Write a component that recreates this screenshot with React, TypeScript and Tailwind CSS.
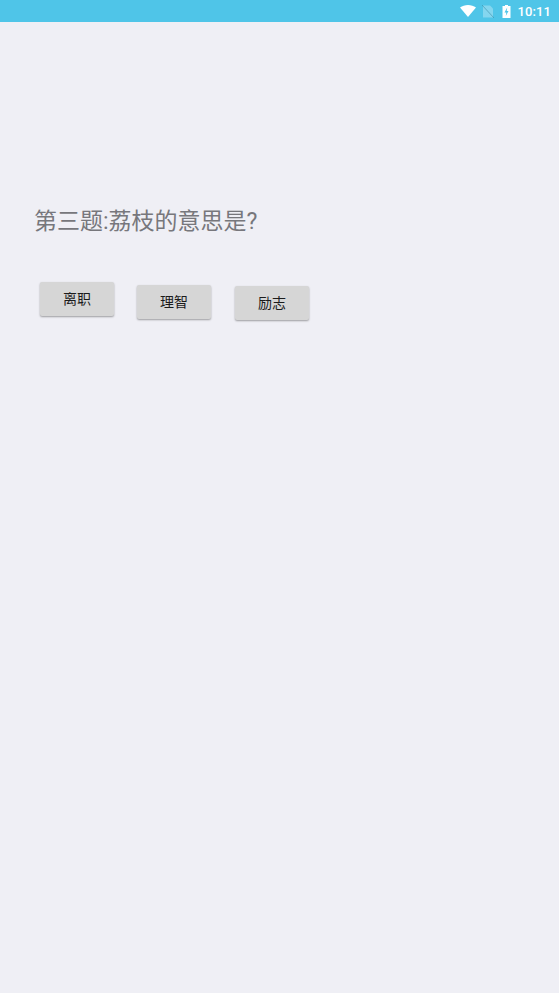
export default function App() {
  const btn = "w-[74px] h-[34px] bg-[#d6d6d6] rounded-[2px] shadow-[0_1px_2px_rgba(0,0,0,0.35)] flex items-center justify-center text-[14px] text-[#1c1c1c] shrink-0";
  const font = { fontFamily: '"Roboto", "Noto Sans CJK SC", sans-serif' };
  return (
    <div className="w-[559px] h-[993px] bg-[#efeff5] flex flex-col overflow-hidden" style={font}>
      <div className="h-[22px] bg-[#4fc5e8] flex items-center justify-end pr-[8px] shrink-0">
        <svg width="16" height="12" viewBox="0 0 16 12" className="mr-[6px]">
          <path d="M0 2.6C2.2 .9 5 0 8 0s5.800.9 8 2.600L8 12z" fill="#fff" />
        </svg>
        <svg width="12" height="13" viewBox="0 0 12 13" className="mr-[8px]">
          <path d="M1 .5h7l3 3V12.500H1z" fill="#ffffff" fillOpacity="0.3" />
          <path d="M0 0l12 13" stroke="#3f8fa8" strokeOpacity="0.6" strokeWidth="1" />
        </svg>
        <svg width="9" height="13" viewBox="0 0 9 13" className="mr-[7px]">
          <path d="M3 0h3v1h2.500v12H.5V1H3z" fill="#fff" />
          <path d="M5.200 2.500L2.500 7.500h1.800L3.800 11l2.700-5H4.700z" fill="#4fc5e8" />
        </svg>
        <span className="text-[13px] leading-none font-medium text-white tracking-[0.1px]">10:11</span>
      </div>
      <div className="pl-[34px] pt-[185px] text-[23px] leading-[30px] text-[#77777c]">第三题:荔枝的意思是?</div>
      <div className="flex pl-[40px] pt-[45px] items-start">
        <div className={btn}>离职</div>
        <div className={`${btn} ml-[23px] mt-[3px]`}>理智</div>
        <div className={`${btn} ml-[24px] mt-[4px]`}>励志</div>
      </div>
    </div>
  );
}
